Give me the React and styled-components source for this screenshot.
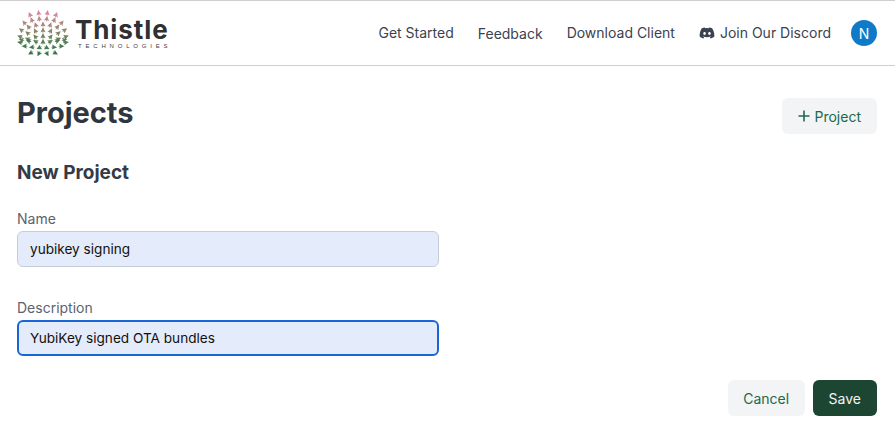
import React from "react";
import styled, { createGlobalStyle } from "styled-components";
import { FaDiscord } from "react-icons/fa";

const GlobalStyle = createGlobalStyle`
  html, body {
    margin: 0;
    padding: 0;
    background: #fff;
    font-family: Inter, "Liberation Sans", sans-serif;
  }
`;

// leaf colour goes from pink at the top to green at the bottom
const leafColor = (y) => {
  const t = Math.min(1, Math.max(0, (y - 10) / 44));
  const stops = [
    [226, 120, 156],
    [178, 122, 122],
    [120, 122, 84],
    [58, 112, 64],
    [34, 100, 52],
  ];
  const pos = t * (stops.length - 1);
  const i = Math.min(stops.length - 2, Math.floor(pos));
  const f = pos - i;
  const c = stops[i].map((v, k) => Math.round(v + (stops[i + 1][k] - v) * f));
  return `rgb(${c.join(",")})`;
};

// staggered curved rows clipped to a circle, fanning out from low in the middle
const leaves = [];
for (let row = 0; row < 8; row++) {
  const baseY = 13 + row * 5.8;
  const dy = baseY - 33;
  const half = Math.sqrt(Math.max(0, 25 * 25 - dy * dy)) - 2;
  const n = Math.max(2, Math.round((half * 2) / 7.6));
  for (let i = 0; i <= n; i++) {
    const x = 42 - half + (i * half * 2) / n;
    const bend = (x - 42) * (x - 42) * (row < 5 ? 1 : -0.4) * 0.012;
    const y = baseY + bend;
    leaves.push({
      x,
      y,
      rot: (Math.atan2(x - 42, 46 - y) * 180) / Math.PI,
    });
  }
}

const LogoMark = () => (
  <svg width="52" height="52" viewBox="16 7 52 52" aria-hidden="true">
    {leaves.map((l, i) => (
      <path
        key={i}
        d="M0 -3.2 L2.6 2 L0.6 1.2 L0 3 L-0.6 1.2 L-2.6 2 Z"
        fill={leafColor(l.y)}
        fillOpacity="0.9"
        transform={`translate(${l.x} ${l.y}) rotate(${l.rot})`}
      />
    ))}
  </svg>
);

const Header = styled.header`
  height: 66px;
  box-sizing: border-box;
  border-top: 1px solid #cfcfcf;
  border-bottom: 1px solid #cfcfcf;
  padding: 0 18px 0 17px;
  display: flex;
  align-items: center;
  justify-content: space-between;
`;

const Logo = styled.div`
  display: flex;
  align-items: center;
  gap: 6px;
`;

const LogoText = styled.div`
  display: flex;
  flex-direction: column;
  gap: 0;
  margin-top: 1px;
`;

const LogoName = styled.span`
  font-size: 26px;
  line-height: 24px;
  font-weight: 700;
  letter-spacing: 0.9px;
  color: #2f3033;
`;

const LogoSub = styled.span`
  font-family: "Liberation Sans", sans-serif;
  font-size: 6px;
  line-height: 8px;
  letter-spacing: 3.8px;
  margin-left: 3px;
  color: #3f4044;
`;

const Nav = styled.nav`
  display: flex;
  align-items: center;
  gap: 24px;
`;

const NavLink = styled.a`
  display: flex;
  align-items: center;
  gap: 5px;
  font-size: 14px;
  line-height: 20px;
  color: #3b4250;
  margin-top: ${(p) => (p.$low ? "2px" : "0")};
`;

const Avatar = styled.div`
  width: 26px;
  height: 26px;
  margin-left: -4px;
  border-radius: 50%;
  background: #0f7bc8;
  color: #fff;
  font-size: 14px;
  display: flex;
  align-items: center;
  justify-content: center;
`;

const Main = styled.main`
  padding: 32px 18px 0 17px;
`;

const TitleRow = styled.div`
  display: flex;
  align-items: flex-start;
  justify-content: space-between;
`;

const Title = styled.h1`
  margin: 0;
  font-size: 29px;
  line-height: 30px;
  font-weight: 700;
  color: #2f3640;
`;

const Button = styled.button`
  height: 36px;
  box-sizing: border-box;
  padding: 0 16px;
  border: none;
  border-radius: 6px;
  font-family: inherit;
  font-size: 14px;
  font-weight: 400;
  display: flex;
  align-items: center;
  gap: 4px;
  background: ${(p) => (p.$primary ? "#1c4532" : "#f3f4f6")};
  color: ${(p) => (p.$primary ? "#f3f4f6" : "#20694a")};
`;

const CancelButton = styled(Button)`
  padding: 0 15.5px;
`;

const SubTitle = styled.h2`
  margin: 27px 0 0;
  font-size: 19px;
  line-height: 24px;
  font-weight: 700;
  color: #343a46;
`;

const Form = styled.form`
  width: 422px;
  margin-top: 24px;
  display: flex;
  flex-direction: column;
  gap: 31px;
`;

const Field = styled.label`
  display: flex;
  flex-direction: column;
  gap: 2px;
`;

const Label = styled.span`
  font-size: 14px;
  line-height: 20px;
  color: #5b6370;
`;

const Input = styled.input`
  height: 36px;
  box-sizing: border-box;
  width: 100%;
  padding: 0 ${(p) => (p.$focused ? "11px" : "12px")};
  border-radius: 6px;
  font-family: inherit;
  font-size: 13.6px;
  color: #111;
  background: #e4ebfa;
  outline: none;
  border: ${(p) => (p.$focused ? "2px solid #1a66d6" : "1px solid #c5cdd8")};
`;

const Actions = styled.div`
  margin-top: 24px;
  display: flex;
  justify-content: flex-end;
  gap: 8px;
`;

export default function App() {
  return (
    <>
      <GlobalStyle />
      <Header>
        <Logo>
          <LogoMark />
          <LogoText>
            <LogoName>Thistle</LogoName>
            <LogoSub>TECHNOLOGIES</LogoSub>
          </LogoText>
        </Logo>
        <Nav>
          <NavLink>Get Started</NavLink>
          <NavLink $low>Feedback</NavLink>
          <NavLink>Download Client</NavLink>
          <NavLink>
            <FaDiscord size={16} />
            Join Our Discord
          </NavLink>
          <Avatar>N</Avatar>
        </Nav>
      </Header>
      <Main>
        <TitleRow>
          <Title>Projects</Title>
          <Button type="button">
            <svg width="12" height="12" viewBox="0 0 12 12" aria-hidden="true">
              <path d="M6 0.5v11M0.5 6h11" stroke="currentColor" strokeWidth="1.6" />
            </svg>
            Project
          </Button>
        </TitleRow>
        <SubTitle>New Project</SubTitle>
        <Form onSubmit={(e) => e.preventDefault()}>
          <Field>
            <Label>Name</Label>
            <Input defaultValue="yubikey signing" />
          </Field>
          <Field>
            <Label>Description</Label>
            <Input $focused defaultValue="YubiKey signed OTA bundles" />
          </Field>
        </Form>
        <Actions>
          <CancelButton type="button">Cancel</CancelButton>
          <Button type="button" $primary>
            Save
          </Button>
        </Actions>
      </Main>
    </>
  );
}
